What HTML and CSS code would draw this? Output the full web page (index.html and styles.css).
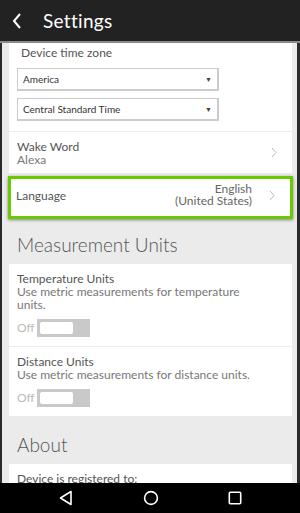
FILE: index.html
```html
<!DOCTYPE html>
<html lang="en">
<head>
    <meta charset="UTF-8">
    <meta name="viewport" content="width=device-width, initial-scale=1.0">
    <title>Settings</title>
    <link rel="stylesheet" href="styles.css">
</head>
<body>
    <div class="phone">
        <div class="app-bar">
            <svg class="back" width="10" height="16" viewBox="0 0 10 16">
                <path d="M8 1 L2 8 L8 15" fill="none" stroke="#fff" stroke-width="2"/>
            </svg>
            <span class="title">Settings</span>
        </div>

        <div class="content">
            <div class="card">
                <div class="row tz">
                    <div class="label">Device time zone</div>
                    <div class="select">America<span class="caret">&#9660;</span></div>
                    <div class="select">Central Standard Time<span class="caret">&#9660;</span></div>
                </div>
                <div class="row link">
                    <div>
                        <div class="label">Wake Word</div>
                        <div class="value">Alexa</div>
                    </div>
                    <svg class="chev" width="6" height="11" viewBox="0 0 6 11"><path d="M1 1 L5 5.5 L1 10" fill="none" stroke="#bbb" stroke-width="1"/></svg>
                </div>
            </div>

            <div class="card highlight">
                <div class="row link lang">
                    <div class="label">Language</div>
                    <div class="lang-value">English<br>(United States)</div>
                    <svg class="chev" width="6" height="11" viewBox="0 0 6 11"><path d="M1 1 L5 5.5 L1 10" fill="none" stroke="#bbb" stroke-width="1"/></svg>
                </div>
            </div>

            <h2 class="section">Measurement Units</h2>
            <div class="card">
                <div class="row units">
                    <div class="label">Temperature Units</div>
                    <div class="value">Use metric measurements for temperature units.</div>
                    <div class="toggle-line"><span class="off">Off</span><span class="toggle"><span class="knob"></span></span></div>
                </div>
                <div class="row units">
                    <div class="label">Distance Units</div>
                    <div class="value">Use metric measurements for distance units.</div>
                    <div class="toggle-line"><span class="off">Off</span><span class="toggle"><span class="knob"></span></span></div>
                </div>
            </div>

            <h2 class="section">About</h2>
            <div class="card">
                <div class="row units">
                    <div class="label">Device is registered to:</div>
                </div>
            </div>
        </div>

        <div class="nav-bar">
            <svg width="14" height="16" viewBox="0 0 14 16"><path d="M12 1.5 L12 14.5 L1.5 8 Z" fill="none" stroke="#fff" stroke-width="1.6" stroke-linejoin="round"/></svg>
            <svg width="16" height="16" viewBox="0 0 16 16"><circle cx="8" cy="8" r="6.4" fill="none" stroke="#fff" stroke-width="1.6"/></svg>
            <svg width="14" height="14" viewBox="0 0 14 14"><rect x="1.3" y="1.3" width="11.4" height="11.4" rx="1" fill="none" stroke="#fff" stroke-width="1.6"/></svg>
        </div>
    </div>
</body>
</html>
```

FILE: styles.css
```css
html, body {
    margin: 0;
    padding: 0;
}
body {
    width: 300px;
    height: 513px;
    overflow: hidden;
    background: #2a2a2a;
    font-family: Lato, "Open Sans", Arial, sans-serif;
    color: #555;
}
.phone {
    height: 513px;
    display: flex;
    flex-direction: column;
}
.app-bar {
    height: 41px;
    background: #222;
    border-bottom: 2px solid #8a8a8a;
    display: flex;
    align-items: center;
    padding-left: 12px;
    flex-shrink: 0;
}
.back {
    margin-right: 21px;
}
.title {
    color: #fff;
    font-size: 19px;
    letter-spacing: 0.3px;
}
.content {
    flex: 1;
    overflow: hidden;
    background: #ebebeb;
    margin: 0 3px 0 2px;
    padding: 0 5px 0 7px;
}
.card {
    background: #fff;
}
.row {
    padding: 0 8px;
    border-bottom: 1px solid #eee;
}
.row:last-child {
    border-bottom: none;
}
.label {
    font-size: 12px;
    line-height: 13px;
    color: #555;
}
.value {
    font-size: 12px;
    line-height: 13px;
    color: #777;
}
.tz {
    padding-top: 3px;
    padding-bottom: 10px;
}
.tz .label {
    margin: 0 0 9px 4px;
}
.select {
    position: relative;
    height: 20px;
    border: 1px solid #ccc;
    border-width: 1px 2px 2px 1px;
    width: 194px;
    font-size: 10px;
    line-height: 20px;
    padding-left: 5px;
    color: #333;
    margin-bottom: 7px;
    box-sizing: content-box;
}
.select:last-child {
    margin-bottom: 0;
}
.caret {
    position: absolute;
    right: 5px;
    top: 0;
    font-size: 7px;
    color: #444;
}
.link {
    display: flex;
    align-items: center;
    justify-content: space-between;
    height: 41px;
}
.link .chev {
    margin-right: 7px;
}
.highlight {
    margin: 3px -1px -3px -1px;
    border: 3px solid #66cc00;
    box-shadow: 0 1px 3px rgba(0,0,0,0.45);
    position: relative;
}
.lang {
    height: 32px;
    padding-left: 5px;
    padding-bottom: 5px;
}
.lang .label {
    flex: 1;
}
.lang-value {
    font-size: 12px;
    line-height: 12px;
    color: #666;
    text-align: right;
    margin-right: 17px;
    margin-top: -1px;
}
.section {
    font-size: 19px;
    font-weight: 300;
    color: #555;
    margin: 0;
    padding: 16px 0 6px 8px;
    line-height: 26px;
}
.units {
    padding-top: 8px;
    padding-bottom: 9px;
}
.units .value {
    max-width: 236px;
}
.toggle-line {
    display: flex;
    align-items: center;
    margin-top: 8px;
}
.off {
    font-size: 12px;
    line-height: 18px;
    color: #bbb;
    width: 20px;
}
.toggle {
    width: 53px;
    height: 18px;
    background: #c9c9c9;
    display: flex;
    align-items: center;
    padding-left: 3px;
    box-sizing: border-box;
}
.knob {
    width: 33px;
    height: 12px;
    background: #fff;
    border-radius: 2px;
}
.nav-bar {
    height: 30px;
    background: #000;
    display: flex;
    align-items: center;
    justify-content: space-between;
    padding: 0 58px 0 59px;
    flex-shrink: 0;
}
```
